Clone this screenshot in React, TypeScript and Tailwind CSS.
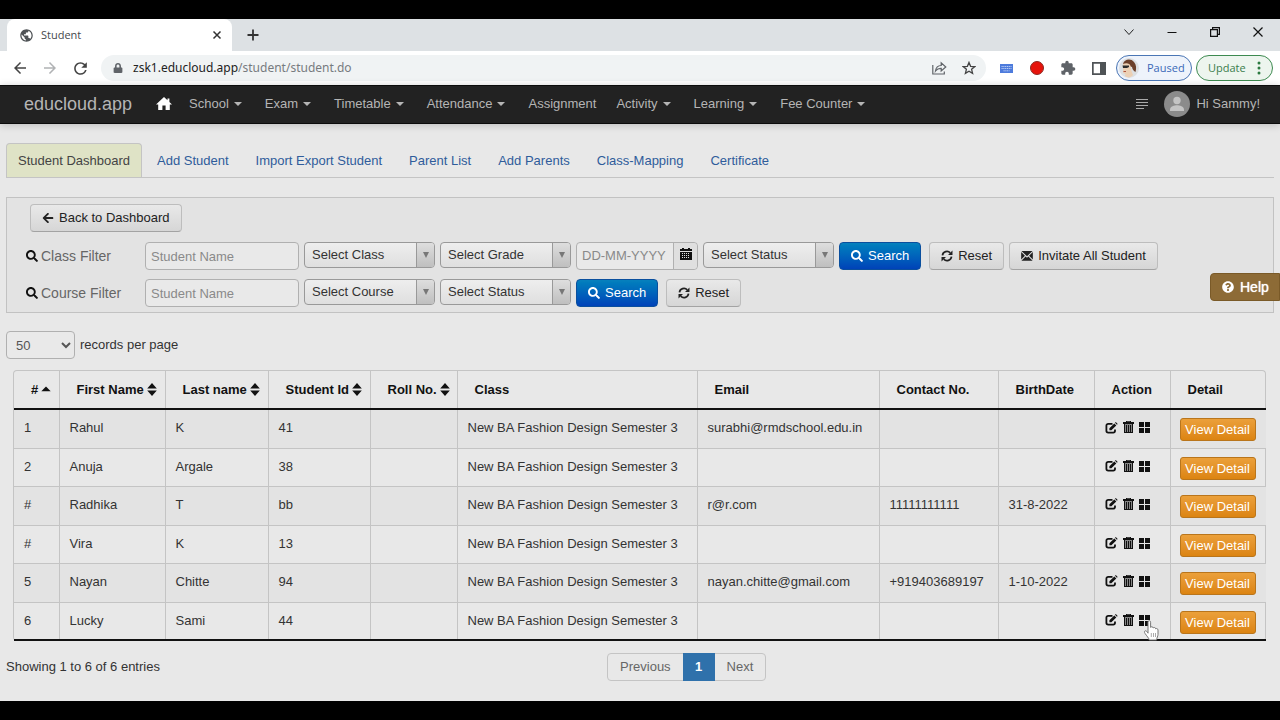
import type { ReactNode } from "react"
import { FaArrowLeft, FaLock, FaQuestionCircle, FaSearch } from "react-icons/fa"
import { MdExtension, MdOutlineArrowBack, MdOutlineArrowForward, MdPublic, MdRefresh } from "react-icons/md"

const menu = [
  { label: "School", caret: true },
  { label: "Exam", caret: true },
  { label: "Timetable", caret: true },
  { label: "Attendance", caret: true },
  { label: "Assignment", caret: false },
  { label: "Activity", caret: true },
  { label: "Learning", caret: true },
  { label: "Fee Counter", caret: true },
]

const tabs = ["Student Dashboard", "Add Student", "Import Export Student", "Parent List", "Add Parents", "Class-Mapping", "Certificate"]

const columns = [
  { label: "#", width: "w-[45px]", sort: "up" },
  { label: "First Name", width: "w-[106px]", sort: "both" },
  { label: "Last name", width: "w-[103px]", sort: "both" },
  { label: "Student Id", width: "w-[102px]", sort: "both" },
  { label: "Roll No.", width: "w-[87px]", sort: "both" },
  { label: "Class", width: "w-[240px]", sort: "" },
  { label: "Email", width: "w-[182px]", sort: "" },
  { label: "Contact No.", width: "w-[119px]", sort: "" },
  { label: "BirthDate", width: "w-[96px]", sort: "" },
  { label: "Action", width: "w-[76px]", sort: "" },
  { label: "Detail", width: "w-[96px]", sort: "" },
]

const className = "New BA Fashion Design Semester 3"

const students = [
  ["1", "Rahul", "K", "41", "", className, "surabhi@rmdschool.edu.in", "", ""],
  ["2", "Anuja", "Argale", "38", "", className, "", "", ""],
  ["#", "Radhika", "T", "bb", "", className, "r@r.com", "11111111111", "31-8-2022"],
  ["#", "Vira", "K", "13", "", className, "", "", ""],
  ["5", "Nayan", "Chitte", "94", "", className, "nayan.chitte@gmail.com", "+919403689197", "1-10-2022"],
  ["6", "Lucky", "Sami", "44", "", className, "", "", ""],
]

function HomeIcon() {
  return (
    <svg viewBox="0 0 16 14" className="h-[14px] w-4" fill="currentColor">
      <path d="M8 0 0 7.6h2.2V13h4.2V8.6h3.2V13h4.2V7.6H16l-2.6-2.5V1.4h-1.9v1.9z" />
    </svg>
  )
}

function RefreshIcon() {
  return (
    <svg viewBox="0 0 14 14" className="size-3" fill="none" stroke="currentColor" strokeWidth="2">
      <path d="M1.7 6.2A5.3 5.3 0 0 1 10.8 3.3M12.3 7.8A5.3 5.3 0 0 1 3.2 10.7" />
      <path d="M13.4.6v5.2H8.2zM.6 13.4V8.2h5.2z" fill="currentColor" stroke="none" />
    </svg>
  )
}

function MailIcon() {
  return (
    <svg viewBox="0 0 14 12" className="h-[10px] w-3" fill="currentColor">
      <path d="M.3 0h13.4L7 6.2zM0 1.3 4.5 5.6 0 10.3zM14 1.3 9.5 5.6l4.5 4.7zM5.4 6.5 7 8l1.6-1.5 5.1 5.2H.3z" />
    </svg>
  )
}

function CalendarIcon() {
  return (
    <svg viewBox="0 0 12 13" className="h-[13px] w-3" fill="currentColor">
      <path d="M2 0h2v1h4V0h2v1h2v2H0V1h2z" />
      <path fillRule="evenodd" d="M0 4h12v8H0zM2 5v1h1V5zm2 0v1h1V5zm2 0v1h1V5zm2 0v1h1V5zM2 7v1h1V7zm2 0v1h1V7zm2 0v1h1V7zm2 0v1h1V7zM2 9v1h1V9zm2 0v1h1V9zm2 0v1h1V9zm2 0v1h1V9z" />
    </svg>
  )
}

function EditIcon() {
  return (
    <svg viewBox="0 0 13 12" className="h-3 w-[13px]">
      <path d="M7.500 1.900H3.200A1.800 1.800 0 0 0 1.400 3.700v5.100a1.800 1.800 0 0 0 1.800 1.800h5A1.800 1.800 0 0 0 10 8.800V7.400" fill="none" stroke="currentColor" strokeWidth="1.800" />
      <path d="M4.400 8.200V6.200L9.300 1.500l2 1.900-4.900 4.800zM10 .8l.8-.7 1.900 1.900-.8.8z" fill="currentColor" />
    </svg>
  )
}

function TrashIcon() {
  return (
    <svg viewBox="0 0 11 13" className="h-[13px] w-[11px]" fill="currentColor">
      <path fillRule="evenodd" d="M3 0h5v1h3v2H0V1h3zM4 .7V1h3V.7z" />
      <path d="M1 3h9v9H1z" opacity=".45" />
      <path d="M1 3h1v9H1zM3 4h1v8H3zM5 4h1v8H5zM7 4h1v8H7zM9 3h1v9H9zM1 11h9v1H1z" />
    </svg>
  )
}

function GridIcon() {
  return (
    <svg viewBox="0 0 11 11" className="size-[11px]" fill="currentColor">
      <path d="M0 0h5v5H0zM6 0h5v5H6zM0 6h5v5H0zM6 6h5v5H6z" />
    </svg>
  )
}

function SortIcon({ kind }: { kind: string }) {
  return (
    <svg viewBox="0 0 10 13" className="ml-[3px] h-[13px] w-[10px]" fill="currentColor">
      {kind === "both" ? <path d="M5 0l4.800 5.500H.2zM5 13 .2 7.500h9.600z" /> : <path d="M5 3.500l4.700 4.800H.3z" />}
    </svg>
  )
}

function HandCursor() {
  return (
    <svg viewBox="0 0 16 21" className="pointer-events-none absolute top-[17px] left-[48px] z-10 h-[21px] w-4" fill="#fff" stroke="#777" strokeWidth="1">
      <path d="M5 13.200V2.200C5 .2 7.600.2 7.600 2.200v5.200c.4-1 2.500-.9 2.600.6.600-.9 2.400-.6 2.500.8.700-.6 2.300-.3 2.300 1.300v4.300c0 2-1.200 3-1.400 5.600H6.200c-.3-2-2.500-4-4.200-6.600-.9-1.400-.6-2.400.3-2.600 1-.2 1.900.9 2.700 2.400z" />
      <path d="M8.300 13v4M10.500 13v4M12.500 13v4" stroke="#aaa" />
    </svg>
  )
}

function Avatar() {
  return (
    <svg viewBox="0 0 20 20" className="size-5">
      <circle cx="10" cy="10" r="10" fill="#dcdfe2" />
      <path d="M4 6c1-5 8-6 11-2 2.500 3 2.500 6 1.500 10-1.500-1-3-2-3.500-5z" fill="#6b3f2a" />
      <path d="M4 6c3-1.500 7-1 7.500 2l1 5 1.500 4c-2 3-6 3-8 1l.5-2-2.500-1z" fill="#ecd0b4" />
      <path d="M3.500 7.500H10V9L8 10H4z" fill="#2b2b2b" />
      <path d="M4.500 13.500h2.500" stroke="#b0533f" />
    </svg>
  )
}

function Caret() {
  return <span className="ml-[5px] border-x-4 border-t-4 border-x-transparent border-t-current" />
}

function Button({ children, primary = false }: { children: ReactNode; primary?: boolean }) {
  const look = primary
    ? "border-[#0a4f9e] bg-linear-to-b from-[#0781bd] to-[#0142b8] text-white"
    : "border-[#bdbdbd] border-b-[#a3a3a3] bg-linear-to-b from-[#e9e9e9] to-[#d6d6d6] text-[#222]"
  return (
    <button type="button" className={`flex h-7 items-center gap-[5px] rounded border px-[11px] whitespace-nowrap ${look}`}>
      {children}
    </button>
  )
}

function Select({ label }: { label: string }) {
  return (
    <span className="relative flex h-[26px] w-[131px] self-start">
      <select aria-label={label} className="w-full appearance-none rounded border border-[#999] bg-linear-to-b from-[#eee] to-[#dfdfdf] pl-[7px] text-[#333]">
        <option>{label}</option>
      </select>
      <span className="pointer-events-none absolute inset-y-px right-px flex w-[18px] items-center justify-center rounded-r-[3px] border-l border-[#999] bg-linear-to-b from-[#dedede] to-[#bfbfbf]">
        <span className="border-x-[3px] border-t-[6px] border-x-transparent border-t-[#777]" />
      </span>
    </span>
  )
}

function NameInput({ id }: { id: string }) {
  return (
    <input id={id} type="text" placeholder="Student Name" className="h-7 w-[154px] rounded border border-[#b0b0b0] bg-[#e9e9e9] px-[5px] placeholder:text-[#8a8a8a]" />
  )
}

function FilterLabel({ id, children }: { id: string; children: ReactNode }) {
  return (
    <label htmlFor={id} className="flex w-[114px] items-center gap-[3px] text-sm text-[#666]">
      <FaSearch className="size-3 text-[#111]" />
      {children}
    </label>
  )
}

function BrowserBar() {
  return (
    <header className="font-['Open_Sans',sans-serif]">
      <div className="flex h-8 bg-[#dde1e4] pl-[7px]">
        <div className="flex w-[225px] items-center rounded-t-lg bg-white pr-[10px] pl-3 text-[11px] text-[#45494d]">
          <MdPublic className="mr-[7px] size-[15px] text-[#4f5356]" />
          <span className="flex-1">Student</span>
          <button type="button" aria-label="Close tab">
            <svg viewBox="0 0 10 10" className="size-[10px]" stroke="#333" strokeWidth="1.500">
              <path d="m1.500 1.500 7 7m0-7-7 7" />
            </svg>
          </button>
        </div>
        <button type="button" aria-label="New tab" className="ml-[15px]">
          <svg viewBox="0 0 12 12" className="size-3" stroke="#333" strokeWidth="1.800">
            <path d="M6 .5v11M.5 6h11" />
          </svg>
        </button>
        <div className="ml-auto flex items-center gap-[33px] pr-[17px] pb-1.5">
          <button type="button" aria-label="Search tabs">
            <svg viewBox="0 0 10 10" className="size-[10px]" stroke="#222" fill="none">
              <path d="m.5 2.500 4.500 5 4.500-5" />
            </svg>
          </button>
          <button type="button" aria-label="Minimize">
            <svg viewBox="0 0 10 10" className="size-[10px]" stroke="#111">
              <path d="M.5 5.500h9" />
            </svg>
          </button>
          <button type="button" aria-label="Restore">
            <svg viewBox="0 0 10 10" className="size-[10px]" stroke="#111" fill="none" strokeWidth="1.200">
              <path d="M.6 2.600h6.800v6.800H.6zM2.600 2.600v-2h6.800v6.800h-2" />
            </svg>
          </button>
          <button type="button" aria-label="Close">
            <svg viewBox="0 0 10 10" className="size-[10px]" stroke="#111" strokeWidth="1.200">
              <path d="m.5.5 9 9m0-9-9 9" />
            </svg>
          </button>
        </div>
      </div>
      <div className="flex h-[34px] items-center bg-white pr-[7px] pl-[11px] text-[#5f6368]">
        <button type="button" aria-label="Back" className="mr-3"><MdOutlineArrowBack className="size-[18px] text-[#444]" /></button>
        <button type="button" aria-label="Forward" className="mr-3"><MdOutlineArrowForward className="size-[18px] text-[#b0b2b4]" /></button>
        <button type="button" aria-label="Reload" className="mr-[11px]"><MdRefresh className="size-[19px] text-[#444]" /></button>
        <div className="flex h-[26px] flex-1 items-center rounded-full bg-[#f0f3f4] pr-[10px] pl-3">
          <FaLock className="mr-[10px] size-[10px]" />
          <a href="#url" className="flex-1 font-['Noto_Sans',sans-serif] text-xs text-[#777b7f]"><span className="text-[#222]">zsk1.educloud.app</span>/student/student.do</a>
          <button type="button" aria-label="Share" className="mr-[15px]">
            <svg viewBox="0 0 15 14" className="h-[14px] w-[15px]" fill="none" stroke="#5f6368" strokeWidth="1.200">
              <path d="M.8 4v9h11.500v-2.500M3.500 10c.5-4 2.500-5.500 5.700-5.500V1.800L13.800 6 9.200 10V7.300C6.500 7.200 5 8 3.500 10z" />
            </svg>
          </button>
          <button type="button" aria-label="Bookmark">
            <svg viewBox="0 0 14 14" className="size-[14px]" fill="none" stroke="#444" strokeWidth="1.300">
              <path d="m7 1.400 1.600 3.900 4.200.3-3.200 2.700 1 4.100L7 10.200l-3.600 2.200 1-4.100L1.200 5.600l4.200-.3z" />
            </svg>
          </button>
        </div>
        <div className="ml-[14px] flex items-center gap-4">
          <svg viewBox="0 0 13 9" className="h-[9px] w-[13px]" fill="#4d7bdc">
            <path d="M0 0h13v9H0z" />
            <path d="M1.500 2.500h10M1.500 4.500h10M3.500 6.800h6" stroke="#b9cdf5" strokeDasharray="1.200 .6" />
          </svg>
          <span className="ml-px size-[14px] rounded-full border border-[#8d2a22] bg-[#e6130b]" />
          <MdExtension className="size-4" />
          <svg viewBox="0 0 14 13" className="h-[13px] w-[14px]" fill="#4f5356">
            <path fillRule="evenodd" d="M0 0h14v13H0zM1.700 1.700v9.600h6.300V1.700z" />
          </svg>
        </div>
        <button type="button" className="ml-[10px] flex h-[26px] w-[76px] items-center gap-2 rounded-full border border-[#4a76b5] bg-[#eef3fb] pl-[2px] text-[11px] text-[#3a68b8]">
          <Avatar />
          Paused
        </button>
        <button type="button" className="ml-1 flex h-[26px] w-[77px] items-center justify-between rounded-full border border-[#3d8a50] bg-[#edf5ee] px-[11px] text-[11px] text-[#3b7d4c]">
          Update
          <svg viewBox="0 0 4 14" className="h-[14px] w-1" fill="#2c7a40">
            <circle cx="2" cy="2" r="1.500" />
            <circle cx="2" cy="7" r="1.500" />
            <circle cx="2" cy="12" r="1.500" />
          </svg>
        </button>
      </div>
    </header>
  )
}

function Navbar() {
  return (
    <nav className="relative z-10 flex h-[39px] items-center border-y border-[#0c0c0c] bg-[#222] pr-5 pb-px pl-6 text-[#b5b5b5] shadow-[0_1px_8px_rgba(0,0,0,0.2)]">
      <a href="#home" className="mr-6 text-lg">educloud.app</a>
      <a href="#dashboard" aria-label="Home" className="mr-[17px] text-white"><HomeIcon /></a>
      <ul className="flex items-center gap-5">
        {menu.map((item) => (
          <li key={item.label}>
            <a href={"#" + item.label} className={`flex items-center whitespace-nowrap ${item.caret ? "mr-[3px]" : ""}`}>
              {item.label}
              {item.caret && <Caret />}
            </a>
          </li>
        ))}
      </ul>
      <svg viewBox="0 0 12 10" className="mr-4 ml-auto h-[10px] w-3" stroke="#aaa">
        <path d="M0 .5h12M0 3.500h12M0 6.500h12M0 9.500h8" />
      </svg>
      <a href="#profile" className="flex items-center gap-1.5">
        <svg viewBox="0 0 26 26" className="size-[26px]" fill="#c4c4c4">
          <circle cx="13" cy="13" r="13" fill="#8b8b8b" />
          <circle cx="13" cy="9.500" r="3.700" />
          <path d="M6 20v-1.500c0-3 4.500-4.200 7-4.200s7 1.200 7 4.200V20z" />
        </svg>
        Hi Sammy!
      </a>
    </nav>
  )
}

function Filters() {
  return (
    <form className="mt-[19px] border border-[#c2c2c2] bg-[#e3e3e3] pt-1.5 pb-[5px] pl-[19px]">
      <div className="mb-[10px] ml-1 flex">
        <Button>
          <FaArrowLeft className="size-3" />
          Back to Dashboard
        </Button>
      </div>
      <div className="mb-[9px] flex flex-wrap gap-[5px]">
        <FilterLabel id="class-name">Class Filter</FilterLabel>
        <NameInput id="class-name" />
        <Select label="Select Class" />
        <Select label="Select Grade" />
        <span className="flex h-7 w-[122px] rounded border border-[#b0b0b0] bg-[#e9e9e9]">
          <input aria-label="Date" placeholder="DD-MM-YYYY" className="w-24 min-w-0 pl-[5px] placeholder:text-[#8a8a8a]" />
          <button type="button" aria-label="Pick a date" className="flex flex-1 justify-center rounded-r border-l border-[#b0b0b0] bg-[#dfdfdf] pt-[5px] text-[#111]">
            <CalendarIcon />
          </button>
        </span>
        <Select label="Select Status" />
        <Button primary>
          <FaSearch className="size-3" />
          Search
        </Button>
        <span className="ml-[3px] flex">
          <Button>
            <RefreshIcon />
            Reset
          </Button>
        </span>
        <Button>
          <MailIcon />
          Invitate All Student
        </Button>
      </div>
      <div className="flex flex-wrap gap-[5px]">
        <FilterLabel id="course-name">Course Filter</FilterLabel>
        <NameInput id="course-name" />
        <Select label="Select Course" />
        <Select label="Select Status" />
        <Button primary>
          <FaSearch className="size-3" />
          Search
        </Button>
        <span className="ml-[3px] flex">
          <Button>
            <RefreshIcon />
            Reset
          </Button>
        </span>
      </div>
    </form>
  )
}

function StudentTable() {
  return (
    <div className="mt-[11px] mr-2 ml-[7px] rounded border-x border-t border-[#c4c4c4]">
      <table className="w-full table-fixed border-b-2 border-b-[#111] text-left text-[#333]">
        <thead>
          <tr className="h-[38px] border-b-2 border-[#111] text-[#111]">
            {columns.map((col) => (
              <th key={col.label} className={`border-l border-l-[#c4c4c4] pl-[17px] font-bold first:border-l-0 ${col.width}`}>
                <span className="flex items-center whitespace-nowrap">
                  {col.label}
                  {col.sort && <SortIcon kind={col.sort} />}
                </span>
              </th>
            ))}
          </tr>
        </thead>
        <tbody>
          {students.map((row, i) => (
            <tr key={row[1]} className="border-b border-[#c4c4c4] align-top odd:h-[39px] odd:bg-[#e3e3e3] even:h-[38px] last:border-b-0">
              {row.map((cell, j) => (
                <td key={j} className="border-l border-l-[#c4c4c4] pt-[9px] pl-[10px] whitespace-nowrap first:border-l-0">
                  {cell}
                </td>
              ))}
              <td className="relative border-l border-l-[#c4c4c4] pt-[11px] pl-[10px] text-[#111]">
                <div className="flex items-center gap-[5px]">
                  <button type="button" aria-label="Edit"><EditIcon /></button>
                  <button type="button" aria-label="Delete"><TrashIcon /></button>
                  <button type="button" aria-label="More"><GridIcon /></button>
                </div>
                {i === students.length - 1 && <HandCursor />}
              </td>
              <td className="border-l border-l-[#c4c4c4] pt-2 pl-[9px]">
                <button type="button" className="h-[23px] w-[76px] rounded-[3px] border border-[#b9751c] bg-linear-to-b from-[#eba03a] to-[#dc8410] leading-[21px] text-white">View Detail</button>
              </td>
            </tr>
          ))}
        </tbody>
      </table>
    </div>
  )
}

export default function App() {
  return (
    <div className="flex min-h-screen flex-col bg-black pt-[19px] font-['Liberation_Sans',Arial,sans-serif] text-[13px] leading-[18px]">
      <BrowserBar />
      <Navbar />
      <main className="relative mb-[19px] flex-1 bg-[#e8e8e8] px-1.5 pt-[19px]">
        <ul className="flex gap-[3px] border-b border-[#c4c4c4]">
          {tabs.map((tab, i) => (
            <li key={tab} className={`flex h-[34px] items-center border border-b-0 px-[11px] ${i === 0 ? "rounded-t border-[#c4c4c4] bg-[#dfe3c6]" : "border-transparent"}`}>
              <a href={"#" + tab} className={i === 0 ? "text-[#444]" : "text-[#2f5c9b]"}>{tab}</a>
            </li>
          ))}
        </ul>
        <Filters />
        <button type="button" className="absolute top-[149px] right-0 flex h-7 w-[70px] items-center gap-1.5 rounded-l border border-[#7a5a28] bg-[#8d6b36] pl-[11px] text-sm text-white [text-shadow:0_0_1px_#fff]">
          <FaQuestionCircle className="size-3" />
          Help
        </button>
        <label className="mt-[18px] flex items-center gap-[5px] text-[#333]">
          <select className="h-7 w-[69px] rounded border border-[#b0b0b0] bg-[#e9e9e9] px-[5px] text-[#555]">
            <option>50</option>
          </select>
          records per page
        </label>
        <StudentTable />
        <div className="mt-3 flex items-center">
          <p className="w-[47.400%] text-[#333]">Showing 1 to 6 of 6 entries</p>
          <div className="flex h-7 rounded border border-[#c4c4c4] text-[#666]">
            <button type="button" className="px-3">Previous</button>
            <button type="button" className="-my-px w-8 bg-[#2f71ab] font-bold text-white">1</button>
            <button type="button" className="px-3">Next</button>
          </div>
        </div>
      </main>
    </div>
  )
}
